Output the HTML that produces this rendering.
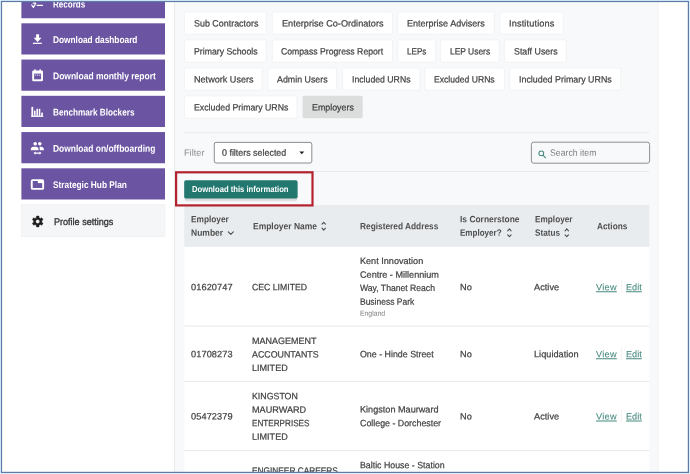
<!DOCTYPE html>
<html lang="en"><head><meta charset="utf-8"><title>Employers</title>
<style>
html,body{margin:0;padding:0;background:#fff}
body{width:690px;height:474px;overflow:hidden;position:relative;font-family:"Liberation Sans",sans-serif;font-size:9.2px;color:#3f3f3f}
#shot{position:absolute;left:0;top:0;width:690px;height:474px;overflow:hidden}
#clip{position:absolute;left:2px;top:2px;width:686px;height:470px;overflow:hidden}
#clip>*{position:absolute;left:-2px;top:-2px}
svg{position:absolute;left:0;top:0;display:block}
.t{position:absolute;white-space:nowrap;line-height:1;display:block;transform-origin:0 0}
.w{color:#fff} .b{font-weight:bold} .m{font-weight:bold}
.d{color:#2b2b2b} .m2{-webkit-text-stroke:0.3px #303030;color:#303030} .k{color:#3f3f3f;-webkit-text-stroke:0.22px #3f3f3f} .g{color:#8c8c8c} .g2{color:#7d7d7d}
.h{color:#4e4e4e;font-weight:bold}
.l{color:#46897f;text-decoration:underline;text-decoration-thickness:0.8px;text-underline-offset:0.8px;-webkit-text-stroke:0.08px #46897f}
.s{color:#7c7c7c}
a{text-decoration:inherit;color:inherit}
</style></head>
<body>
<div id="shot">
<div id="clip"><div id="page" style="width:690px;height:474px;filter:blur(0.3px)">
<svg width="690" height="474" viewBox="0 0 690 474">
<rect x="174.60" y="0.00" width="483.40" height="474.00" fill="#f8f9fa"/>
<rect x="174.20" y="0.00" width="0.80" height="474.00" fill="#e3e5e8"/>
<rect x="657.60" y="0.00" width="0.80" height="474.00" fill="#eceef0"/>
<rect x="21.40" y="-12.95" width="143.60" height="31.20" fill="#6b55a2"/>
<rect x="21.40" y="23.30" width="143.60" height="31.20" fill="#6b55a2"/>
<rect x="21.40" y="59.55" width="143.60" height="31.20" fill="#6b55a2"/>
<rect x="21.40" y="95.80" width="143.60" height="31.20" fill="#6b55a2"/>
<rect x="21.40" y="132.05" width="143.60" height="31.20" fill="#6b55a2"/>
<rect x="21.40" y="168.30" width="143.60" height="31.20" fill="#6b55a2"/>
<rect x="21.40" y="204.55" width="143.60" height="32.00" fill="#f5f6f8" stroke="#eff0f2" stroke-width="0.7"/>
<rect x="184.50" y="11.80" width="81.90" height="22.40" fill="#ffffff" rx="1.6" stroke="#eff0f2" stroke-width="0.8"/>
<rect x="272.30" y="11.80" width="120.20" height="22.40" fill="#ffffff" rx="1.6" stroke="#eff0f2" stroke-width="0.8"/>
<rect x="397.90" y="11.80" width="96.40" height="22.40" fill="#ffffff" rx="1.6" stroke="#eff0f2" stroke-width="0.8"/>
<rect x="499.80" y="11.80" width="63.50" height="22.40" fill="#ffffff" rx="1.6" stroke="#eff0f2" stroke-width="0.8"/>
<rect x="184.50" y="39.80" width="81.90" height="22.40" fill="#ffffff" rx="1.6" stroke="#eff0f2" stroke-width="0.8"/>
<rect x="272.30" y="39.80" width="120.20" height="22.40" fill="#ffffff" rx="1.6" stroke="#eff0f2" stroke-width="0.8"/>
<rect x="397.90" y="39.80" width="37.70" height="22.40" fill="#ffffff" rx="1.6" stroke="#eff0f2" stroke-width="0.8"/>
<rect x="440.60" y="39.80" width="58.50" height="22.40" fill="#ffffff" rx="1.6" stroke="#eff0f2" stroke-width="0.8"/>
<rect x="504.40" y="39.80" width="62.00" height="22.40" fill="#ffffff" rx="1.6" stroke="#eff0f2" stroke-width="0.8"/>
<rect x="184.50" y="67.80" width="77.60" height="22.40" fill="#ffffff" rx="1.6" stroke="#eff0f2" stroke-width="0.8"/>
<rect x="267.80" y="67.80" width="68.70" height="22.40" fill="#ffffff" rx="1.6" stroke="#eff0f2" stroke-width="0.8"/>
<rect x="342.50" y="67.80" width="77.30" height="22.40" fill="#ffffff" rx="1.6" stroke="#eff0f2" stroke-width="0.8"/>
<rect x="424.90" y="67.80" width="79.60" height="22.40" fill="#ffffff" rx="1.6" stroke="#eff0f2" stroke-width="0.8"/>
<rect x="509.80" y="67.80" width="110.90" height="22.40" fill="#ffffff" rx="1.6" stroke="#eff0f2" stroke-width="0.8"/>
<rect x="184.50" y="95.80" width="112.50" height="22.40" fill="#ffffff" rx="1.6" stroke="#eff0f2" stroke-width="0.8"/>
<rect x="302.60" y="95.80" width="60.10" height="22.40" fill="#dcdddd" rx="1.6"/>
<rect x="184.30" y="132.30" width="464.90" height="0.80" fill="#e6e8ea"/>
<rect x="184.30" y="171.20" width="464.90" height="0.80" fill="#e6e8ea"/>
<rect x="214.30" y="142.40" width="97.50" height="20.60" fill="#ffffff" rx="1.8" stroke="#808080" stroke-width="0.9"/>
<path d="M299.3 151.6h5l-2.5 2.7z" fill="#222"/>
<rect x="531.40" y="142.20" width="118.20" height="21.00" fill="#f8f9fa" rx="2.2" stroke="#8e9090" stroke-width="1.0"/>
<g fill="none" stroke="#46897f" stroke-width="1.05" stroke-linecap="round"><circle cx="541.3" cy="153.3" r="2.4"/><path d="M543.2 155.3l2.4 2.5"/></g>
<rect x="184.20" y="181.40" width="113.40" height="19.00" fill="#000" rx="2" opacity="0.08"/>
<rect x="184.70" y="182.00" width="112.40" height="19.80" fill="#000" rx="2.5" opacity="0.05"/>
<rect x="184.20" y="180.30" width="113.40" height="18.10" fill="#22776f" rx="1.6"/>
<rect x="184.30" y="205.00" width="464.90" height="41.90" fill="#e9ecef"/>
<rect x="184.30" y="246.90" width="464.90" height="227.10" fill="#ffffff"/>
<rect x="184.30" y="325.65" width="464.90" height="0.90" fill="#e4e6e8"/>
<rect x="184.30" y="380.85" width="464.90" height="0.90" fill="#e4e6e8"/>
<rect x="184.30" y="450.25" width="464.90" height="0.90" fill="#e4e6e8"/>
<rect x="621.00" y="279.90" width="0.70" height="12.90" fill="#efeceb"/>
<rect x="621.00" y="347.10" width="0.70" height="12.90" fill="#efeceb"/>
<rect x="621.00" y="409.20" width="0.70" height="12.90" fill="#efeceb"/>
<rect x="176.10" y="172.30" width="136.40" height="33.10" fill="none" stroke="#b4222e" stroke-width="2.2"/>
<g fill="none" stroke="#4e4e4e" stroke-width="1.1" stroke-linecap="round" stroke-linejoin="round"><path d="M322.00 224.20l1.7 -1.9 1.7 1.9M322.00 228.20l1.7 1.9 1.7 -1.9"/></g>
<g fill="none" stroke="#4e4e4e" stroke-width="1.1" stroke-linecap="round" stroke-linejoin="round"><path d="M507.70 230.80l1.7 -1.9 1.7 1.9M507.70 234.80l1.7 1.9 1.7 -1.9"/></g>
<g fill="none" stroke="#4e4e4e" stroke-width="1.1" stroke-linecap="round" stroke-linejoin="round"><path d="M565.10 230.80l1.7 -1.9 1.7 1.9M565.10 234.80l1.7 1.9 1.7 -1.9"/></g>
<path d="M228.3 231.9l2.5 2.4 2.5 -2.4" fill="none" stroke="#4e4e4e" stroke-width="1.15" stroke-linecap="round" stroke-linejoin="round"/>
<g fill="none" stroke="#fff" stroke-linecap="round" stroke-linejoin="round"><path d="M31.7 5.0l1.7 2.4 2.4 -4.2h-2.6" stroke-width="1.25"/><path d="M37.2 5.4h5.2" stroke-width="1.3"/></g>
<g fill="#fff"><rect x="36.1" y="34.3" width="3" height="4"/><path d="M33.7 37.8h7.8l-3.9 4.1z"/><rect x="32.9" y="42.7" width="8.9" height="1.25"/></g>
<g><rect x="32.2" y="70.4" width="10.8" height="10.8" rx="1.3" fill="#fff"/><rect x="34.3" y="69.3" width="1.5" height="2.2" rx="0.4" fill="#fff"/><rect x="39.4" y="69.3" width="1.5" height="2.2" rx="0.4" fill="#fff"/><rect x="34.1" y="73.6" width="7" height="5.7" fill="#6b55a2"/><g fill="#fff" opacity="0.75"><rect x="34.9" y="74.6" width="1.2" height="1.1"/><rect x="37" y="74.6" width="1.2" height="1.1"/><rect x="39.1" y="74.6" width="1.2" height="1.1"/></g></g>
<g fill="#fff"><rect x="31.4" y="106.9" width="1.8" height="10"/><rect x="31.4" y="115.6" width="11.8" height="1.3"/><rect x="34.05" y="110.6" width="1.5" height="5.2"/><rect x="36.45" y="108.8" width="1.5" height="7"/><rect x="38.8" y="108.8" width="1.5" height="7"/><rect x="41.2" y="112.6" width="1.7" height="3.2"/></g>
<g fill="#fff"><circle cx="35.2" cy="143.8" r="1.75"/><circle cx="39.8" cy="143.8" r="1.75"/><path d="M30.8 150.2v-0.8c0-1.6 1.2-2.7 2.8-2.7h2.2c1.6 0 2.8 1.1 2.8 2.7v0.8z"/><path d="M39.4 147.0c0.4-0.2 0.8-0.3 1.3-0.3h0.4c1.6 0 2.8 1.1 2.8 2.7v0.8h-4.1v-0.8c0-0.9-0.1-1.7-0.4-2.4z"/><path d="M33.5 153.1l2-1.7v1.15h4v-1.15l2 1.7-2 1.7v-1.15h-4v1.15z"/></g>
<g><rect x="31.75" y="180.15" width="11.4" height="8.7" rx="0.9" fill="none" stroke="#fff" stroke-width="1.9"/><rect x="37.9" y="180.2" width="5" height="2.9" fill="#fff"/></g>
<path d="M36.33 217.63 L36.48 216.03 L38.92 216.03 L39.07 217.63 L40.36 218.38 L41.82 217.71 L43.04 219.83 L41.73 220.75 L41.73 222.25 L43.04 223.17 L41.82 225.29 L40.36 224.62 L39.07 225.37 L38.92 226.97 L36.48 226.97 L36.33 225.37 L35.04 224.62 L33.58 225.29 L32.36 223.17 L33.67 222.25 L33.67 220.75 L32.36 219.83 L33.58 217.71 L35.04 218.38Z M39.75 221.50a2.05 2.05 0 1 0 -4.1 0a2.05 2.05 0 1 0 4.1 0Z" fill="#1d1d1d" fill-rule="evenodd" stroke="#1d1d1d" stroke-width="0.4" stroke-linejoin="round"/>
</svg>
<nav class="sidebar">
<a class="t w b" style="left:53.10px;top:-1px;transform:translateY(0.5px) scaleX(0.8319) rotate(0.05deg);font-size:9.7px">Records</a>
<a class="t w b" style="left:53.10px;top:35px;transform:translateY(0px) scaleX(0.8574) rotate(0.05deg);font-size:9.7px">Download dashboard</a>
<a class="t w b" style="left:53.10px;top:71px;transform:translateY(0.25px) scaleX(0.8766) rotate(0.05deg);font-size:9.7px">Download monthly report</a>
<a class="t w b" style="left:53.10px;top:107px;transform:translateY(0.5px) scaleX(0.8450) rotate(0.05deg);font-size:9.7px">Benchmark Blockers</a>
<a class="t w b" style="left:53.10px;top:143px;transform:translateY(0.75px) scaleX(0.8725) rotate(0.05deg);font-size:9.7px">Download on/offboarding</a>
<a class="t w b" style="left:53.10px;top:180px;transform:translateY(0px) scaleX(0.8573) rotate(0.05deg);font-size:9.7px">Strategic Hub Plan</a>
<a class="t d m2" style="left:53.60px;top:217px;transform:translateY(0px) scaleX(0.9340) rotate(0.05deg);font-size:9.7px">Profile settings</a>
</nav>
<div class="tabs" role="tablist">
<a class="t k" role="tab" style="left:193.50px;top:19px;transform:translateY(0.5px) scaleX(0.9708) rotate(0.05deg)">Sub Contractors</a>
<a class="t k" role="tab" style="left:281.70px;top:19px;transform:translateY(0.5px) scaleX(0.9944) rotate(0.05deg)">Enterprise Co-Ordinators</a>
<a class="t k" role="tab" style="left:407.10px;top:19px;transform:translateY(0.5px) scaleX(0.9822) rotate(0.05deg)">Enterprise Advisers</a>
<a class="t k" role="tab" style="left:508.80px;top:19px;letter-spacing:0.139px;transform:translateY(0.5px) scaleX(1.0000) rotate(0.05deg)">Institutions</a>
<a class="t k" role="tab" style="left:193.50px;top:47px;transform:translateY(0.5px) scaleX(0.9501) rotate(0.05deg)">Primary Schools</a>
<a class="t k" role="tab" style="left:281.10px;top:47px;transform:translateY(0.5px) scaleX(0.9436) rotate(0.05deg)">Compass Progress Report</a>
<a class="t k" role="tab" style="left:407.10px;top:47px;transform:translateY(0.5px) scaleX(0.8853) rotate(0.05deg)">LEPs</a>
<a class="t k" role="tab" style="left:449.90px;top:47px;transform:translateY(0.5px) scaleX(0.9177) rotate(0.05deg)">LEP Users</a>
<a class="t k" role="tab" style="left:513.70px;top:47px;transform:translateY(0.5px) scaleX(0.9640) rotate(0.05deg)">Staff Users</a>
<a class="t k" role="tab" style="left:193.50px;top:75px;transform:translateY(0.5px) scaleX(0.9884) rotate(0.05deg)">Network Users</a>
<a class="t k" role="tab" style="left:276.80px;top:75px;transform:translateY(0.5px) scaleX(0.9630) rotate(0.05deg)">Admin Users</a>
<a class="t k" role="tab" style="left:351.70px;top:75px;transform:translateY(0.5px) scaleX(0.9475) rotate(0.05deg)">Included URNs</a>
<a class="t k" role="tab" style="left:434.30px;top:75px;transform:translateY(0.5px) scaleX(0.9351) rotate(0.05deg)">Excluded URNs</a>
<a class="t k" role="tab" style="left:518.90px;top:75px;transform:translateY(0.5px) scaleX(0.9663) rotate(0.05deg)">Included Primary URNs</a>
<a class="t k" role="tab" style="left:193.50px;top:103px;transform:translateY(0.5px) scaleX(0.9526) rotate(0.05deg)">Excluded Primary URNs</a>
<a class="t k" role="tab" style="left:311.50px;top:103px;transform:translateY(0.5px) scaleX(0.9641) rotate(0.05deg)">Employers</a>
</div>
<div class="toolbar">
<span class="t g" style="left:183.90px;top:148px;letter-spacing:0.006px;transform:translateY(0.75px) scaleX(1.0000) rotate(0.05deg)">Filter</span>
<span class="t k" style="left:221.80px;top:148px;transform:translateY(0.75px) scaleX(0.9678) rotate(0.05deg)">0 filters selected</span>
<span class="t g2" style="left:550.20px;top:148px;transform:translateY(0.75px) scaleX(0.9474) rotate(0.05deg)">Search item</span>
<span class="t w m" style="left:192.40px;top:185px;transform:translateY(0px) scaleX(0.8909) rotate(0.05deg);font-size:8.6px">Download this information</span>
</div>
<div class="table" role="table">
<div class="thead" role="row">
<span class="t h" role="columnheader" style="left:191.30px;top:215px;transform:translateY(0.25px) scaleX(0.9039) rotate(0.05deg)">Employer</span>
<span class="t h" role="columnheader" style="left:191.30px;top:228px;transform:translateY(0.75px) scaleX(0.9260) rotate(0.05deg)">Number</span>
<span class="t h" role="columnheader" style="left:252.50px;top:222px;transform:translateY(0.25px) scaleX(0.9208) rotate(0.05deg)">Employer Name</span>
<span class="t h" role="columnheader" style="left:359.50px;top:222px;transform:translateY(0.25px) scaleX(0.9061) rotate(0.05deg)">Registered Address</span>
<span class="t h" role="columnheader" style="left:460.10px;top:215px;transform:translateY(0.25px) scaleX(0.9184) rotate(0.05deg)">Is Cornerstone</span>
<span class="t h" role="columnheader" style="left:460.10px;top:228px;transform:translateY(0.75px) scaleX(0.8750) rotate(0.05deg)">Employer?</span>
<span class="t h" role="columnheader" style="left:534.60px;top:215px;transform:translateY(0.25px) scaleX(0.8967) rotate(0.05deg)">Employer</span>
<span class="t h" role="columnheader" style="left:534.60px;top:228px;transform:translateY(0.75px) scaleX(0.8917) rotate(0.05deg)">Status</span>
<span class="t h" role="columnheader" style="left:596.80px;top:222px;transform:translateY(0.25px) scaleX(0.9035) rotate(0.05deg)">Actions</span>
</div>
<div class="row" role="row">
<span class="t k" role="cell" style="left:190.90px;top:283px;letter-spacing:0.108px;transform:translateY(0.25px) scaleX(1.0000) rotate(0.05deg)">01620747</span>
<span class="t k" role="cell" style="left:252.40px;top:283px;transform:translateY(0.25px) scaleX(0.9458) rotate(0.05deg)">CEC LIMITED</span>
<span class="t k" role="cell" style="left:359.70px;top:257px;transform:translateY(0px) scaleX(0.9905) rotate(0.05deg)">Kent Innovation</span>
<span class="t k" role="cell" style="left:359.70px;top:270px;transform:translateY(0.75px) scaleX(0.9911) rotate(0.05deg)">Centre - Millennium</span>
<span class="t k" role="cell" style="left:359.70px;top:284px;transform:translateY(0px) scaleX(0.9367) rotate(0.05deg)">Way, Thanet Reach</span>
<span class="t k" role="cell" style="left:359.70px;top:297px;transform:translateY(0.75px) scaleX(0.9236) rotate(0.05deg)">Business Park</span>
<span class="t k" role="cell" style="left:459.90px;top:283px;transform:translateY(0.25px) scaleX(1.0000) rotate(0.05deg)">No</span>
<span class="t k" role="cell" style="left:534.40px;top:283px;letter-spacing:0.024px;transform:translateY(0.25px) scaleX(1.0000) rotate(0.05deg)">Active</span>
<a class="t l" role="cell" style="left:596.20px;top:283px;letter-spacing:0.267px;transform:translateY(0.25px) scaleX(1.0000) rotate(0.05deg)">View</a>
<a class="t l" role="cell" style="left:626.00px;top:283px;transform:translateY(0.25px) scaleX(0.9941) rotate(0.05deg)">Edit</a>
<span class="t s" role="cell" style="left:359.70px;top:309px;transform:translateY(0.75px) scaleX(0.9235) rotate(0.05deg);font-size:7.4px">England</span>
</div>
<div class="row" role="row">
<span class="t k" role="cell" style="left:190.90px;top:350px;letter-spacing:0.108px;transform:translateY(0.25px) scaleX(1.0000) rotate(0.05deg)">01708273</span>
<span class="t k" role="cell" style="left:252.40px;top:337px;transform:translateY(0px) scaleX(0.9786) rotate(0.05deg)">MANAGEMENT</span>
<span class="t k" role="cell" style="left:252.40px;top:350px;transform:translateY(0.5px) scaleX(0.9625) rotate(0.05deg)">ACCOUNTANTS</span>
<span class="t k" role="cell" style="left:252.40px;top:364px;transform:translateY(0px) scaleX(0.9862) rotate(0.05deg)">LIMITED</span>
<span class="t k" role="cell" style="left:359.70px;top:350px;transform:translateY(0.25px) scaleX(0.9627) rotate(0.05deg)">One - Hinde Street</span>
<span class="t k" role="cell" style="left:459.90px;top:350px;transform:translateY(0.25px) scaleX(1.0000) rotate(0.05deg)">No</span>
<span class="t k" role="cell" style="left:534.40px;top:350px;letter-spacing:0.010px;transform:translateY(0.25px) scaleX(1.0000) rotate(0.05deg)">Liquidation</span>
<a class="t l" role="cell" style="left:596.20px;top:350px;letter-spacing:0.267px;transform:translateY(0.25px) scaleX(1.0000) rotate(0.05deg)">View</a>
<a class="t l" role="cell" style="left:626.00px;top:350px;transform:translateY(0.25px) scaleX(0.9941) rotate(0.05deg)">Edit</a>
</div>
<div class="row" role="row">
<span class="t k" role="cell" style="left:190.90px;top:412px;letter-spacing:0.108px;transform:translateY(0.5px) scaleX(1.0000) rotate(0.05deg)">05472379</span>
<span class="t k" role="cell" style="left:252.40px;top:392px;transform:translateY(0.25px) scaleX(0.9586) rotate(0.05deg)">KINGSTON</span>
<span class="t k" role="cell" style="left:252.40px;top:405px;transform:translateY(0.75px) scaleX(0.9913) rotate(0.05deg)">MAURWARD</span>
<span class="t k" role="cell" style="left:252.40px;top:419px;transform:translateY(0.25px) scaleX(0.8860) rotate(0.05deg)">ENTERPRISES</span>
<span class="t k" role="cell" style="left:252.40px;top:432px;transform:translateY(0.75px) scaleX(0.9862) rotate(0.05deg)">LIMITED</span>
<span class="t k" role="cell" style="left:359.70px;top:405px;transform:translateY(0.5px) scaleX(0.9923) rotate(0.05deg)">Kingston Maurward</span>
<span class="t k" role="cell" style="left:359.70px;top:419px;transform:translateY(0.25px) scaleX(0.9618) rotate(0.05deg)">College - Dorchester</span>
<span class="t k" role="cell" style="left:459.90px;top:412px;transform:translateY(0.5px) scaleX(1.0000) rotate(0.05deg)">No</span>
<span class="t k" role="cell" style="left:534.40px;top:412px;letter-spacing:0.024px;transform:translateY(0.5px) scaleX(1.0000) rotate(0.05deg)">Active</span>
<a class="t l" role="cell" style="left:596.20px;top:412px;letter-spacing:0.267px;transform:translateY(0.5px) scaleX(1.0000) rotate(0.05deg)">View</a>
<a class="t l" role="cell" style="left:626.00px;top:412px;transform:translateY(0.5px) scaleX(0.9941) rotate(0.05deg)">Edit</a>
</div>
<div class="row" role="row">
<span class="t k" role="cell" style="left:252.40px;top:466px;transform:translateY(0.75px) scaleX(0.9040) rotate(0.05deg)">ENGINEER CAREERS</span>
<span class="t k" role="cell" style="left:359.70px;top:461px;transform:translateY(0.25px) scaleX(0.9580) rotate(0.05deg)">Baltic House - Station</span>
</div>
</div>
</div></div>
<svg width="690" height="474" viewBox="0 0 690 474"><path d="M0 0h690v474h-690zM1.5 1.5v470.9h686.9v-470.9z" fill="#dcf0fd" fill-rule="evenodd"/><rect x="1.5" y="1.5" width="686.9" height="470.9" fill="none" stroke="#5d7aa8" stroke-width="1.2"/></svg>
</div>
</body></html>
